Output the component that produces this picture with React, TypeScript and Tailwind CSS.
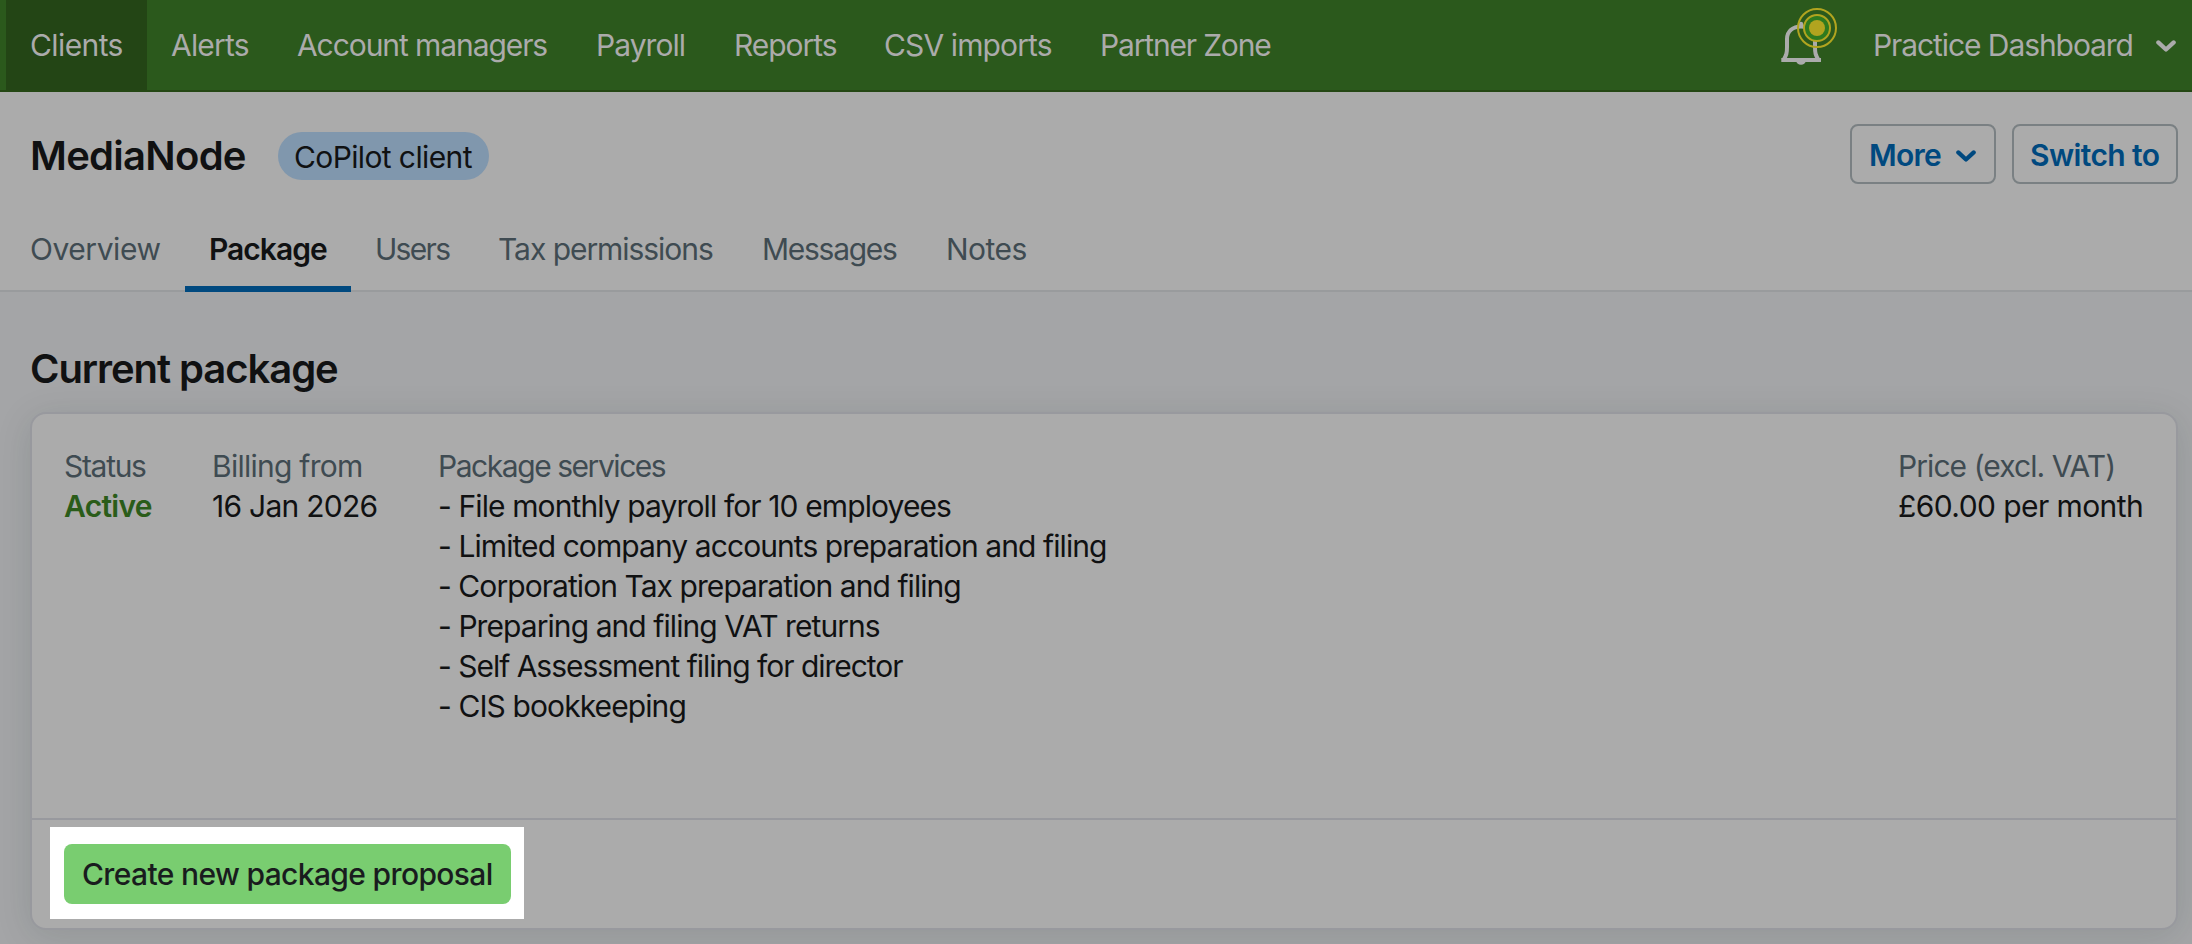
import React from 'react';

const navItems = [
  { label: 'Clients', className: 'w-[141px] tracking-[-0.6px] bg-[#234515]' },
  { label: 'Alerts', className: 'w-[126px] tracking-[-0.8px]' },
  { label: 'Account managers', className: 'w-[299px] tracking-[-1.08px]' },
  { label: 'Payroll', className: 'w-[138px] tracking-[-0.95px]' },
  { label: 'Reports', className: 'w-[150px] tracking-[-1.05px]' },
  { label: 'CSV imports', className: 'w-[216px] tracking-[-0.88px]' },
  { label: 'Partner Zone', className: 'w-[220px] tracking-[-1.17px]' },
];

const tabs = [
  { label: 'Overview', className: 'w-[179px] tracking-[-0.45px]' },
  { label: 'Package', className: 'w-[166px] tracking-[-0.98px] font-semibold text-[#101112] border-b-[6px] border-[#00497f]' },
  { label: 'Users', className: 'w-[123px] tracking-[-1.7px]' },
  { label: 'Tax permissions', className: 'w-[264px] tracking-[-1.05px]' },
  { label: 'Messages', className: 'w-[184px] tracking-[-1.28px]' },
  { label: 'Notes', className: 'w-[130px] tracking-[-0.53px]' },
];

const services = [
  { label: 'File monthly payroll for 10 employees', className: 'tracking-[-0.89px]' },
  { label: 'Limited company accounts preparation and filing', className: 'tracking-[-0.92px]' },
  { label: 'Corporation Tax preparation and filing', className: 'tracking-[-0.94px]' },
  { label: 'Preparing and filing VAT returns', className: 'tracking-[-0.93px]' },
  { label: 'Self Assessment filing for director', className: 'tracking-[-1.02px]' },
  { label: 'CIS bookkeeping', className: 'tracking-[-0.9px]' },
];

function Chevron({ className }: { className?: string }) {
  return (
    <svg width="20" height="12" viewBox="0 0 20 12" fill="none" className={className}>
      <path d="M2.3 2.4 L10 9.5 L17.7 2.4" stroke="currentColor" strokeWidth="4.2" strokeLinecap="round" strokeLinejoin="round" />
    </svg>
  );
}

function NotificationBell() {
  return (
    <svg width="80" height="80" viewBox="0 0 80 80" fill="none">
      <g stroke="#ababab" strokeWidth="4">
        <path d="M13.5 60 C16.5 55 17 53 17 47 V39 C17 31 23 26.4 31 26.4 C39 26.4 45 31 45 39 V47 C45 53 45.5 55 48.5 60" />
        <path d="M11.3 60 H51" />
      </g>
      <path d="M28.8 26 V24 A2.2 2.2 0 0 1 33.2 24 V26 Z" fill="#ababab" />
      <path d="M26 61 A5.2 5 0 0 0 36 61 Z" fill="#ababab" />
      <circle cx="47" cy="28" r="19" stroke="#b1a41f" strokeWidth="2" />
      <circle cx="47" cy="28" r="13" fill="#2f7a1e" stroke="#b1a41f" strokeWidth="2" />
      <circle cx="47" cy="28" r="8" fill="#b1a41f" />
    </svg>
  );
}

export default function App() {
  return (
    <div className="h-[944px] w-[2192px] overflow-hidden whitespace-nowrap bg-[#a4a5a7] font-[Inter,sans-serif] text-[30px] leading-10 text-[#101112]">
      <header className="flex h-[92px] border-b-2 border-[#244714] bg-[#2b591c] pl-1.5 text-[#ababab]">
        <nav className="flex">
          {navItems.map((item) => (
            <a key={item.label} className={`h-[90px] pl-6 leading-[90px] ${item.className}`}>
              {item.label}
            </a>
          ))}
        </nav>
        <div className="ml-auto flex pr-4">
          <NotificationBell />
          <div className="ml-[23px] flex">
            <span className="w-[283px] leading-[90px] tracking-[-1.08px]">Practice Dashboard</span>
            <Chevron className="mt-10" />
          </div>
        </div>
      </header>

      <section className="h-[200px] border-b-2 border-[#999b9d] bg-[#ababab]">
        <div className="flex h-32 items-center pl-[30px] pr-[14px]">
          <h1 className="w-[248px] text-[40px] font-semibold leading-[42px] tracking-[-0.72px]">MediaNode</h1>
          <span className="h-12 w-[211px] rounded-full bg-[#8097ad] pl-4 leading-[50px] tracking-[-0.62px]">CoPilot client</span>
          <div className="-mt-1 ml-auto flex gap-4 font-semibold text-[#00497f]">
            <button className="flex h-[60px] w-[146px] rounded-lg border-2 border-[#7a8083] pl-[17px] leading-[58px] tracking-[-0.7px]">
              <span className="w-[87px] text-left">More</span>
              <Chevron className="mt-6" />
            </button>
            <button className="h-[60px] w-[166px] rounded-lg border-2 border-[#7a8083] pl-4 text-left leading-[58px] tracking-[-0.6px]">Switch to</button>
          </div>
        </div>
        <div className="-mb-0.5 flex pl-1.5 text-[#3f4b52]">
          {tabs.map((tab) => (
            <a key={tab.label} className={`h-[72px] pl-6 leading-[58px] ${tab.className}`}>
              {tab.label}
            </a>
          ))}
        </div>
      </section>

      <main className="pl-[30px] pr-[14px] pt-[52px]">
        <h2 className="text-[40px] font-semibold leading-[50px] tracking-[-1.06px]">Current package</h2>
        <div className="mt-[18px] h-[518px] rounded-2xl border-2 border-[#98999e] bg-[#ababab] shadow-[0_6px_36px_rgba(20,40,30,0.12)]">
          <div className="flex h-[404px] px-8 pt-8 leading-[41px]">
            <div className="w-[148px]">
              <div className="h-10 tracking-[-1.3px] text-[#3f4b52]">Status</div>
              <div className="h-10 font-semibold tracking-[-0.7px] text-[#2a5c19]">Active</div>
            </div>
            <div className="w-[226px]">
              <div className="h-10 tracking-[-0.74px] text-[#3f4b52]">Billing from</div>
              <div className="h-10 tracking-[-0.74px]">16 Jan 2026</div>
            </div>
            <div>
              <div className="h-10 tracking-[-1.45px] text-[#3f4b52]">Package services</div>
              {services.map((service) => (
                <div key={service.label} className={`h-10 ${service.className}`}>
                  - {service.label}
                </div>
              ))}
            </div>
            <div className="ml-auto w-[246px]">
              <div className="h-10 tracking-[-0.93px] text-[#3f4b52]">Price (excl. VAT)</div>
              <div className="h-10 tracking-[-0.58px]">£60.00 per month</div>
            </div>
          </div>
          <div className="border-t-2 border-[#98999e] pl-[18px] pt-[7px]">
            <div className="h-[92px] w-[474px] bg-white pl-3.5 pt-[17px]">
              <button className="h-[60px] w-[447px] rounded-lg bg-[#79cd70] pl-[18px] text-left font-medium leading-[61px] tracking-[-0.64px] text-[#191c1e]">
                Create new package proposal
              </button>
            </div>
          </div>
        </div>
      </main>
    </div>
  );
}
